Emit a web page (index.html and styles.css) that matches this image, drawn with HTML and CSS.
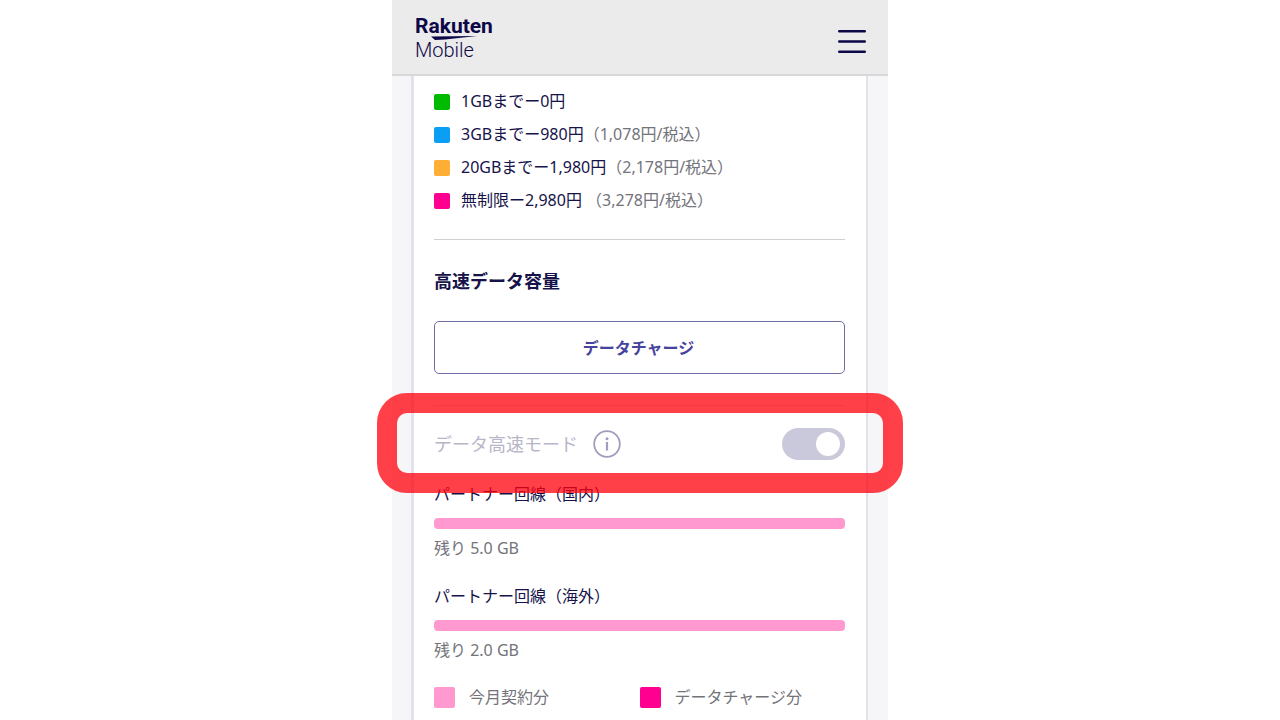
FILE: index.html
```html
<!DOCTYPE html>
<html lang="ja">
<head>
  <meta charset="UTF-8" />
  <meta name="viewport" content="width=device-width, initial-scale=1.0"/>
  <title>Rakuten Mobile</title>
  <link rel="stylesheet" href="styles.css">
</head>
<body>
  <div class="phone">
    <header class="header">
      <a href="#" class="logo">
        <span class="logo-rakuten">Rakuten</span>
        <svg class="logo-line" width="78" height="4" viewBox="0 0 78 4" aria-hidden="true">
          <path d="M16 0.4L62 0L30 3.4L20 4Z" fill="#0c0847"/>
        </svg>
        <span class="logo-mobile">Mobile</span>
      </a>
      <button class="btn-menu" aria-label="メニュー">
        <svg width="28" height="23" viewBox="0 0 28 23" stroke="#0c0847" stroke-width="2.4" stroke-linecap="round">
          <path d="M1.2 1.2H26.8M1.2 11.5H26.8M1.2 21.8H26.8"/>
        </svg>
      </button>
    </header>

    <main class="card">
      <ul class="plans">
        <li><span class="box green"></span><span>1GBまでー0円</span></li>
        <li><span class="box blue"></span><span>3GBまでー980円<span class="tax">（1,078円/税込）</span></span></li>
        <li><span class="box orange"></span><span>20GBまでー1,980円<span class="tax">（2,178円/税込）</span></span></li>
        <li><span class="box pink"></span><span>無制限ー2,980円 <span class="tax">（3,278円/税込）</span></span></li>
      </ul>

      <section class="capacity">
        <h2>高速データ容量</h2>
        <button class="btn-charge">データチャージ</button>
      </section>

      <section class="mode">
        <label for="speedMode">データ高速モード</label>
        <svg class="info" width="28" height="28" viewBox="0 0 28 28" fill="none" stroke="#9f9dbd" aria-hidden="true">
          <circle cx="14" cy="14" r="12.8" stroke-width="1.8"/>
          <path d="M14 12V20.5" stroke-width="2.2"/>
          <circle cx="14" cy="8.8" r="1.5" fill="#9f9dbd" stroke="none"/>
        </svg>
        <input type="checkbox" id="speedMode" class="switch" checked>
        <div class="highlight"></div>
      </section>

      <section class="usage">
        <h3>パートナー回線（国内）</h3>
        <div class="bar"></div>
        <p>残り 5.0 GB</p>
      </section>

      <section class="usage">
        <h3>パートナー回線（海外）</h3>
        <div class="bar"></div>
        <p>残り 2.0 GB</p>
      </section>

      <ul class="legend">
        <li><span class="box light-pink"></span>今月契約分</li>
        <li><span class="box pink"></span>データチャージ分</li>
      </ul>
    </main>
  </div>
</body>
</html>
```
FILE: styles.css
```css
* {
  box-sizing: border-box;
}

body {
  margin: 0;
  background: #fff;
  color: #16124a;
  font-family: 'Noto Sans', 'Noto Sans CJK JP', sans-serif;
  font-size: 16px;
  line-height: 24px;
}

h2, h3, p, ul {
  margin: 0;
  padding: 0;
}

ul {
  list-style: none;
}

button {
  font-family: inherit;
  cursor: pointer;
}

.phone {
  display: flex;
  flex-direction: column;
  max-width: 496px;
  min-height: 100vh;
  margin: 0 auto;
  background: #f6f6f8;
}

/* header */
.header {
  display: flex;
  justify-content: space-between;
  align-items: flex-end;
  padding: 16px 22px 14px 23px;
  background: #ebebeb;
  border-bottom: 2px solid #d8d8da;
}

.logo {
  display: flex;
  flex-direction: column;
  color: #0c0847;
  font-family: Roboto, sans-serif;
  line-height: 20px;
  text-decoration: none;
}

.logo-rakuten {
  font-size: 21px;
  font-weight: bold;
}

.logo-mobile {
  font-size: 20px;
  font-weight: 300;
}

.btn-menu {
  display: flex;
  padding: 7px 0;
  border: none;
  background: none;
}

/* card */
.card {
  flex: 1;
  margin: 0 20px 0 19px;
  padding: 13px 21px 13px 20px;
  background: #fff;
  border: solid #e3e2ec;
  border-width: 0 2px 0 3px;
}

.box {
  flex: none;
  width: 16px;
  height: 16px;
  border-radius: 2px;
}

.green { background: #0b0; }
.blue { background: #0a9ff5; }
.orange { background: #ffae35; }
.pink { background: #ff0090; }
.light-pink { background: #ff99d0; }

.plans {
  display: flex;
  flex-direction: column;
  gap: 8px;
  padding-bottom: 26px;
  border-bottom: 1px solid #d0d0d4;
}

.plans li {
  display: flex;
  align-items: center;
  gap: 11px;
  line-height: 25px;
}

.tax {
  color: #73737a;
}

.capacity {
  padding: 27px 0 31px;
  border-bottom: 1px solid #e4e4ea;
}

.capacity h2 {
  margin-bottom: 26px;
  font-size: 18px;
  line-height: 28px;
}

.btn-charge {
  width: 100%;
  height: 53px;
  padding: 0 2px 2px 0;
  background: #fff;
  color: #46439e;
  border: 1px solid #6f6da8;
  border-radius: 5px;
  font-size: 16px;
  font-weight: bold;
}

/* speed mode */
.mode {
  position: relative;
  display: flex;
  align-items: center;
  gap: 15px;
  margin: 22px 0;
}

.mode label {
  color: #b7b6c8;
  font-size: 18px;
}

.switch {
  appearance: none;
  width: 63px;
  height: 32px;
  margin: 0 0 0 auto;
  padding: 4px 5px;
  border-radius: 16px;
  background: #cac9dc;
}

.switch::before {
  content: "";
  display: block;
  width: 24px;
  height: 24px;
  border-radius: 50%;
  background: #fff;
}

.switch:checked::before {
  margin-left: auto;
}

.highlight {
  position: absolute;
  inset: -35px -58px -33px -57px;
  border: 20px solid rgba(255, 0, 12, 0.75);
  border-radius: 30px;
  pointer-events: none;
}

/* usage */
.usage {
  margin-bottom: 24px;
}

.usage h3 {
  font-size: 16px;
  font-weight: normal;
}

.usage p {
  color: #73737a;
}

.bar {
  height: 11px;
  margin: 12px 0 7px;
  border-radius: 4px;
  background: #ff99d0;
}

.legend {
  display: grid;
  grid-template-columns: 1fr 1fr;
  color: #73737a;
  line-height: 22px;
}

.legend li {
  display: flex;
  align-items: center;
  gap: 14px;
}

.legend .box {
  width: 21px;
  height: 21px;
}
```
